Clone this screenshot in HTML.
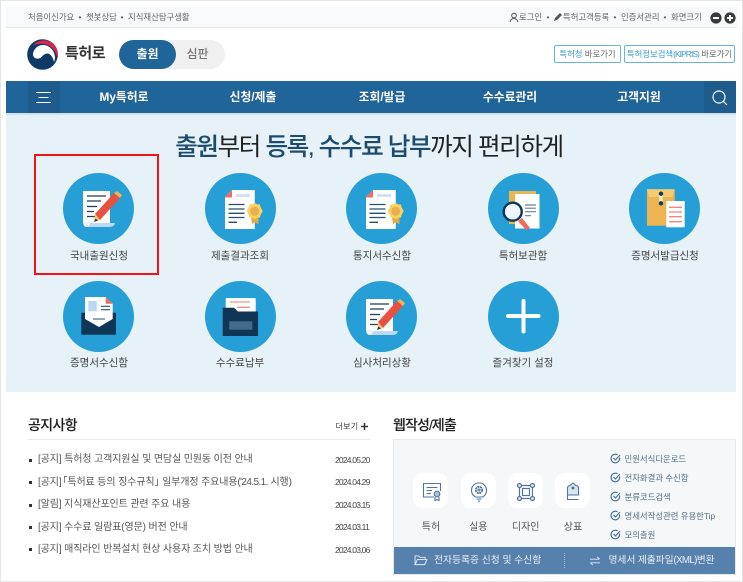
<!DOCTYPE html>
<html lang="ko"><head><meta charset="utf-8"><title>특허로</title>
<style>
*{box-sizing:border-box;margin:0;padding:0}
html,body{width:743px;height:582px;overflow:hidden;background:#fff}
body{position:relative;font-family:"Liberation Sans","Noto Sans CJK KR",sans-serif;color:#444}
#w{position:absolute;left:0;top:0;width:743px;height:582px;filter:blur(.3px)}
.a{position:absolute;white-space:nowrap}
.c{position:absolute;width:71px;height:71px;border-radius:50%;background:#259fd6}
.c svg{display:block}
.l{position:absolute;width:140px;text-align:center;font-size:10.5px;line-height:14px;color:#444;white-space:nowrap}
.n{position:absolute;top:81px;height:32px;line-height:32px;color:#fff;font-weight:700;font-size:11.8px;white-space:nowrap;transform:translateX(-50%)}
.t{font-size:8.4px;line-height:12px;color:#666;top:11px}
.nt{left:38px;font-size:10px;line-height:14px;color:#555;letter-spacing:-.12px}
.d{left:335px;font-size:8.5px;line-height:12px;color:#444;letter-spacing:-.8px}
.b{position:absolute;left:29px;width:3px;height:3px;background:#333}
.ck{position:absolute;left:610px}
.cl{left:624.5px;font-size:8.4px;line-height:12px;color:#55708c}
.sq{position:absolute;top:473px;width:35px;height:35px;border-radius:10px;background:#fff}
.sl{position:absolute;top:521px;width:60px;text-align:center;font-size:10px;line-height:14px;color:#555}
</style></head><body><div id="w">
<svg width="0" height="0" style="position:absolute"><defs>
<symbol id="doc" viewBox="0 0 71 71">
<path d="M20 18H47V50H20Z" fill="#fff"/>
<path d="M20 49H27V54H24Q20 54 20 49Z" fill="#eaf3fb"/>
<path d="M25 54Q27 53 27 50H52Q51 54 47 54Z" fill="#bcd9f5"/>
<path d="M24 23H43M24 28H38M24 33.500H34M24 38.500H31M24 43.500H33" stroke="#1d3f5f" stroke-width="1.300"/>
<path d="M32 41L51 20L57 25L37 47Z" fill="#e8513f"/>
<path d="M51 20L54 18L59 22L57 25Z" fill="#f0b354"/>
<path d="M32 41L37 47L31 49Z" fill="#f5c86d"/>
<path d="M31 49L32.500 45.500L35 47.500Z" fill="#1d3f5f"/>
</symbol>
<symbol id="cert" viewBox="0 0 71 71">
<path d="M27 17H50V56H20V24Z" fill="#fff"/>
<path d="M50 17H49V56H50Z" fill="#cfe2f8"/>
<path d="M20 24L27 17V24.500H20Z" fill="#ed6d5f"/>
<rect x="31" y="21" width="14" height="3" fill="#cfe2f8"/>
<path d="M23.500 31.500H39.500M23.500 36H39.500M23.500 40.300H39.500M23.500 44.500H39.500M23.500 49.300H32" stroke="#25506f" stroke-width="1.300"/>
<path d="M46 44H53.500V51.500L49.700 49L47 51.500Z" fill="#e8a93e"/>
<path d="M49.700 30L52 31.300L55 31.500L55.500 34L57.700 38.300L55.500 42L55 44.500L52 44.800L49.700 46.300L47.400 44.800L44.400 44.500L43.900 42L41.700 38.300L43.900 34L44.400 31.500L47.400 31.300Z" fill="#fbd25c"/>
<circle cx="49.700" cy="38.300" r="4.500" fill="#e9ae4f"/>
</symbol>
</defs></svg>

<div class="a" style="left:0;top:0;width:743px;height:582px;border:1px solid #e6e6e6"></div>

<!-- top bar -->
<div class="a" style="left:6px;top:6px;width:731px;height:22px;background:#f8f9fa;border-bottom:1px solid #e8e8e8"></div>
<span class="a t" style="left:28px">처음이신가요</span><span class="a t" style="left:78.500px">•</span>
<span class="a t" style="left:86px">챗봇상담</span><span class="a t" style="left:120.500px">•</span>
<span class="a t" style="left:128px">지식재산탐구생활</span>
<svg class="a" style="left:509px;top:12px" width="10" height="11" viewBox="0 0 10 11"><circle cx="5" cy="3.500" r="2.300" fill="none" stroke="#555"/><path d="M1 10Q2 6.500 5 6.500Q8 6.500 9 10" fill="none" stroke="#555"/></svg>
<span class="a t" style="left:519px">로그인</span><span class="a t" style="left:546.500px">•</span>
<svg class="a" style="left:553px;top:12px" width="10" height="10" viewBox="0 0 10 10"><path d="M1 9L2 6L7 1L9 3L4 8Z" fill="#555"/></svg>
<span class="a t" style="left:563px">특허고객등록</span><span class="a t" style="left:613.500px">•</span>
<span class="a t" style="left:621px">인증서관리</span><span class="a t" style="left:663.500px">•</span>
<span class="a t" style="left:671px">화면크기</span>
<svg class="a" style="left:709.500px;top:11.500px" width="27" height="12" viewBox="0 0 27 12"><circle cx="6" cy="6" r="5.600" fill="#3a3a3a"/><rect x="3" y="5" width="6" height="2" fill="#fff"/><circle cx="20" cy="6" r="5.600" fill="#3a3a3a"/><path d="M17 6H23M20 3V9" stroke="#fff" stroke-width="2"/></svg>

<!-- logo -->
<svg class="a" style="left:27px;top:39px" width="31" height="31" viewBox="0 0 31 31">
<circle cx="15.500" cy="15.500" r="15.300" fill="#0f3a68"/>
<path d="M6 16C6 10.500 10.500 6 16 6C22 6 27.500 11 28 18C28 20 27.500 21.500 27 23C26 18.500 24 15 20.500 14.500C17.500 14.500 16 16.500 14 18.500C11 20.500 7 20 6 16Z" fill="#fff"/>
<path d="M6 6.500C11 0 22 -0.500 27.500 6C31 10 31.500 15 30.500 20C29.500 13.500 26 8.500 21 6C16 4 10.500 4.500 6 6.500Z" fill="#d8284a"/>
</svg>
<span class="a" style="left:65px;top:43px;font-size:15px;line-height:22px;font-weight:700;color:#333;letter-spacing:-.4px">특허로</span>
<div class="a" style="left:119px;top:40px;width:106px;height:28.500px;border-radius:15px;background:#f0f0f0"></div>
<div class="a" style="left:119px;top:40px;width:57px;height:28.500px;border-radius:15px;background:#20659a;color:#fff;font-weight:700;font-size:12px;line-height:29px;text-align:center">출원</div>
<span class="a" style="left:186.500px;top:40px;font-size:12px;line-height:29px;color:#777;font-weight:500">심판</span>
<div class="a" style="left:554px;top:45px;width:67px;height:18px;border:1px solid #68b4dc;border-radius:2px;font-size:8.4px;line-height:16px;text-align:center;color:#666;background:#fff"><span style="color:#3a9ad0">특허청</span> 바로가기</div>
<div class="a" style="left:624px;top:45px;width:111px;height:18px;border:1px solid #68b4dc;border-radius:2px;font-size:8.4px;line-height:16px;text-align:center;color:#666;background:#fff"><span style="color:#3a9ad0">특허정보검색<span style="letter-spacing:-.9px">(KIPRIS)</span></span> 바로가기</div>

<!-- nav -->
<div class="a" style="left:6px;top:81px;width:730px;height:32px;background:#20659a"></div>
<div class="a" style="left:6px;top:113px;width:730px;height:2px;background:#d4e0e9"></div>
<div class="a" style="left:28px;top:81px;width:32px;height:32px;background:#1d5c8d"></div>
<div class="a" style="left:704px;top:81px;width:32px;height:32px;background:#1d5c8d"></div>
<svg class="a" style="left:36px;top:91px" width="16" height="12" viewBox="0 0 16 12"><path d="M0 1.500H15M2.500 6.500H12.500M0 11.500H15" stroke="#fff" stroke-width="1"/></svg>
<span class="n" style="left:124px">My특허로</span>
<span class="n" style="left:253px">신청/제출</span>
<span class="n" style="left:382px">조회/발급</span>
<span class="n" style="left:510px">수수료관리</span>
<span class="n" style="left:639px">고객지원</span>
<svg class="a" style="left:711px;top:89px" width="18" height="18" viewBox="0 0 18 18"><circle cx="8" cy="8" r="6" fill="none" stroke="#fff" stroke-width="1.200"/><path d="M12.500 12.500L16 16" stroke="#fff" stroke-width="1.200"/></svg>

<!-- hero -->
<div class="a" style="left:6px;top:115px;width:730px;height:277px;background:#e6f1f8"></div>
<div class="a" style="left:175px;top:129.500px;width:388px;font-size:24.500px;line-height:36px;letter-spacing:-1.35px;color:#222;text-align:center"><b style="color:#1c4b6e;font-weight:500;-webkit-text-stroke:.1px #1c4b6e">출원</b>부터 <b style="color:#1c4b6e;font-weight:500;-webkit-text-stroke:.1px #1c4b6e">등록, 수수료 납부</b>까지 편리하게</div>
<div class="a" style="left:34px;top:154px;width:125px;height:121px;border:2px solid #f01414"></div>

<div class="c" style="left:63px;top:173px"><svg width="71" height="71"><use href="#doc"/></svg></div>
<div class="c" style="left:205px;top:173px"><svg width="71" height="71"><use href="#cert"/></svg></div>
<div class="c" style="left:346px;top:173px"><svg width="71" height="71"><use href="#cert"/></svg></div>
<div class="c" style="left:488px;top:173px"><svg width="71" height="71" viewBox="0 0 71 71">
<rect x="21" y="18" width="27" height="33" fill="#edb552"/>
<path d="M27 21H51.500V55.500H27Z" fill="#fff"/>
<path d="M37 32H48M37 35.200H48M37 38.700H48M37 42.700H43" stroke="#6b8198" stroke-width="1.200"/>
<path d="M30 48L38 57L42 55L34 45Z" fill="#ee6b5c"/>
<circle cx="24.700" cy="38.700" r="9" fill="#eff7fe" stroke="#10365a" stroke-width="2.400"/>
</svg></div>
<div class="c" style="left:629.300px;top:173px"><svg width="71" height="71" viewBox="0 0 71 71">
<rect x="18" y="16.300" width="27.700" height="36.400" fill="#edb552"/>
<path d="M18 16.300H45.700L43.500 24H20Z" fill="#f5cb6f"/>
<rect x="30" y="20" width="4" height="10" fill="#fbe7b7"/>
<circle cx="32" cy="20.700" r="2.200" fill="#123a5e"/><circle cx="32" cy="30.300" r="2.200" fill="#123a5e"/>
<rect x="37.300" y="28" width="18.400" height="26.300" fill="#fff"/>
<path d="M40 34.300H53M40 39H53M40 43.700H53M40 48.700H53" stroke="#f4877a" stroke-width="1.300"/>
</svg></div>

<span class="l" style="left:29px;top:249px">국내출원신청</span>
<span class="l" style="left:170px;top:249px">제출결과조회</span>
<span class="l" style="left:312px;top:249px">통지서수신함</span>
<span class="l" style="left:453px;top:249px">특허보관함</span>
<span class="l" style="left:595px;top:249px">증명서발급신청</span>

<div class="c" style="left:63px;top:281px"><svg width="71" height="71" viewBox="0 0 71 71">
<rect x="18.300" y="31.700" width="34.700" height="22" fill="#0f3557"/>
<path d="M22 16H42.700L49.700 22.700V38L36 46L22 38Z" fill="#fff"/>
<path d="M42.700 16L49.700 22.700H42.700Z" fill="#ee6b5c"/>
<rect x="25.300" y="20" width="8.400" height="10.300" fill="#bcd6f5"/>
<path d="M38 25.300H47M38 28.700H47M30 38H42" stroke="#25506f" stroke-width="1.100"/>
</svg></div>
<div class="c" style="left:205px;top:281px"><svg width="71" height="71" viewBox="0 0 71 71">
<rect x="20.700" y="17" width="30" height="16" rx="1" fill="#fff"/>
<path d="M25 21H45M32 26.300H45" stroke="#f07c6e" stroke-width="1.100"/>
<path d="M17.700 26.700H29L33 30.500H53V55H17.700Z" fill="#0f3557"/>
<rect x="24.300" y="40.300" width="23" height="8.400" fill="#456b8c"/>
</svg></div>
<div class="c" style="left:346px;top:281px"><svg width="71" height="71"><use href="#doc"/></svg></div>
<div class="c" style="left:488px;top:281px"><svg width="71" height="71" viewBox="0 0 71 71"><path d="M35.500 20V50.500M20 35H50.500" stroke="#fff" stroke-width="4" stroke-linecap="round"/></svg></div>

<span class="l" style="left:29px;top:356px">증명서수신함</span>
<span class="l" style="left:170px;top:356px">수수료납부</span>
<span class="l" style="left:312px;top:356px">심사처리상황</span>
<span class="l" style="left:453px;top:356px">즐겨찾기 설정</span>

<!-- notice -->
<span class="a" style="left:28px;top:415px;font-size:14px;line-height:21px;font-weight:500;color:#222;letter-spacing:-.65px;-webkit-text-stroke:.1px #222">공지사항</span>
<span class="a" style="left:335.500px;top:420px;font-size:8.2px;line-height:13px;color:#444">더보기</span>
<svg class="a" style="left:361px;top:423px" width="7" height="7" viewBox="0 0 7 7"><path d="M0 3.500H7M3.500 0V7" stroke="#333" stroke-width="1.500"/></svg>
<div class="a" style="left:28px;top:439px;width:342px;height:1px;background:#e8e8e8"></div>

<i class="b" style="top:459px"></i><span class="a nt" style="top:453px">[공지] 특허청 고객지원실 및 면담실 민원동 이전 안내</span><span class="a d" style="top:454px">2024.05.20</span>
<i class="b" style="top:481px"></i><span class="a nt" style="top:475.500px">[공지]<span style="margin-left:-4px">「</span>특허료 등의 징수규칙<span style="letter-spacing:-5px">」</span> 일부개정 주요내용<span style="letter-spacing:-.6px">('24.5.1.</span> 시행)</span><span class="a d" style="top:476px">2024.04.29</span>
<i class="b" style="top:504px"></i><span class="a nt" style="top:498px">[알림] 지식재산포인트 관련 주요 내용</span><span class="a d" style="top:499px">2024.03.15</span>
<i class="b" style="top:526px"></i><span class="a nt" style="top:520.500px">[공지] 수수료 일람표(영문) 버전 안내</span><span class="a d" style="top:521px">2024.03.11</span>
<i class="b" style="top:548px"></i><span class="a nt" style="top:543px">[공지] 매직라인 반복설치 현상 사용자 조치 방법 안내</span><span class="a d" style="top:544px">2024.03.06</span>

<!-- web -->
<span class="a" style="left:393px;top:415px;font-size:14px;line-height:21px;font-weight:500;color:#222;letter-spacing:-.9px;-webkit-text-stroke:.1px #222">웹작성/제출</span>
<div class="a" style="left:393px;top:439px;width:343px;height:136px;background:#f5f7f9;border:1px solid #e6e8ea"></div>
<div class="sq" style="left:413px"></div><div class="sq" style="left:460.500px"></div><div class="sq" style="left:508px"></div><div class="sq" style="left:555px"></div>
<svg class="a" style="left:421.500px;top:482px" width="20" height="20" viewBox="0 0 20 20" fill="none" stroke="#53759b" stroke-width="1.100"><path d="M12 15H1.500V1.500H18.500V9"/><path d="M4.500 5.500H15.500M4.500 8.500H10M4.500 11.500H9"/><circle cx="15" cy="12" r="2.800" fill="#a9c2dc"/><path d="M13 15V18.500L15 17.500L17 18.500V15"/></svg>
<svg class="a" style="left:468.500px;top:482px" width="20" height="20" viewBox="0 0 20 20" fill="none" stroke="#53759b" stroke-width="1.100"><path d="M6.500 15A7.500 7.500 0 1 1 13.500 15"/><circle cx="10" cy="8" r="3.200" stroke-width="1.800" stroke-dasharray="2 .6"/><circle cx="10" cy="8" r="1"/><path d="M6.500 15H13.500M7.500 17H12.500M9 19H11"/></svg>
<svg class="a" style="left:516px;top:481.500px" width="20" height="20" viewBox="0 0 20 20" fill="none" stroke="#53759b" stroke-width="1.200"><circle cx="3.500" cy="3.500" r="2" fill="#dbe5f0"/><circle cx="16.500" cy="3.500" r="2" fill="#dbe5f0"/><circle cx="3.500" cy="16.500" r="2" fill="#dbe5f0"/><circle cx="16.500" cy="16.500" r="2" fill="#dbe5f0"/><path d="M5.500 3.500H14.500M5.500 16.500H14.500M3.500 5.500V14.500M16.500 5.500V14.500"/><rect x="6.500" y="6.500" width="7" height="7"/></svg>
<svg class="a" style="left:563px;top:481px" width="20" height="20" viewBox="0 0 20 20" fill="none" stroke="#53759b" stroke-width="1.100"><path d="M4.500 14V7Q4.500 5 7 4.500L10 2L13 4.500Q15.500 5 15.500 7V14Z" fill="#dbe5f0"/><circle cx="10" cy="7" r="1.500" fill="#53759b" stroke="none"/><path d="M4.500 14V18.500H15.500"/></svg>
<span class="sl" style="left:401px">특허</span><span class="sl" style="left:448.300px">실용</span><span class="sl" style="left:495.700px">디자인</span><span class="sl" style="left:543px">상표</span>

<svg class="ck" style="top:453px" width="11" height="11" viewBox="0 0 11 11" fill="none" stroke="#3f6d9c" stroke-width="1.100"><path d="M9.500 4.500A4.300 4.300 0 1 1 7.500 1.800"/><path d="M3.500 5L5.500 7L10 2"/></svg>
<svg class="ck" style="top:472px" width="11" height="11" viewBox="0 0 11 11" fill="none" stroke="#3f6d9c" stroke-width="1.100"><path d="M9.500 4.500A4.300 4.300 0 1 1 7.500 1.800"/><path d="M3.500 5L5.500 7L10 2"/></svg>
<svg class="ck" style="top:491px" width="11" height="11" viewBox="0 0 11 11" fill="none" stroke="#3f6d9c" stroke-width="1.100"><path d="M9.500 4.500A4.300 4.300 0 1 1 7.500 1.800"/><path d="M3.500 5L5.500 7L10 2"/></svg>
<svg class="ck" style="top:510px" width="11" height="11" viewBox="0 0 11 11" fill="none" stroke="#3f6d9c" stroke-width="1.100"><path d="M9.500 4.500A4.300 4.300 0 1 1 7.500 1.800"/><path d="M3.500 5L5.500 7L10 2"/></svg>
<svg class="ck" style="top:529px" width="11" height="11" viewBox="0 0 11 11" fill="none" stroke="#3f6d9c" stroke-width="1.100"><path d="M9.500 4.500A4.300 4.300 0 1 1 7.500 1.800"/><path d="M3.500 5L5.500 7L10 2"/></svg>
<span class="a cl" style="top:453px">민원서식다운로드</span>
<span class="a cl" style="top:472px">전자화결과 수신함</span>
<span class="a cl" style="top:491px">분류코드검색</span>
<span class="a cl" style="top:510px">명세서작성관련 유용한Tip</span>
<span class="a cl" style="top:529px">모의출원</span>

<div class="a" style="left:394px;top:546.500px;width:341px;height:27.500px;background:#5781ad"></div>
<div class="a" style="left:564px;top:553px;height:15px;border-left:1px dotted #a9c0d8"></div>
<svg class="a" style="left:413.500px;top:555px" width="14" height="11" viewBox="0 0 15 12" fill="none" stroke="#e4edf6"><path d="M1 10.500V1H5L6.500 2.500H12V5"/><path d="M1 10.500L3.500 5H14L11.500 10.500Z"/></svg>
<span class="a" style="left:434px;top:553px;font-size:9.8px;line-height:15px;color:#e9f0f7">전자등록증 신청 및 수신함</span>
<svg class="a" style="left:589px;top:555.500px" width="12" height="10" viewBox="0 0 13 11" fill="none" stroke="#e4edf6"><path d="M1 3.500H11.500M9 1L11.500 3.500M12 7.500H1.500M4 10L1.500 7.500"/></svg>
<span class="a" style="left:608.500px;top:553px;font-size:9.8px;line-height:15px;color:#e9f0f7;letter-spacing:-.1px">명세서 제출파일<span style="letter-spacing:-.7px">(XML)</span>변환</span>
</div></body></html>
